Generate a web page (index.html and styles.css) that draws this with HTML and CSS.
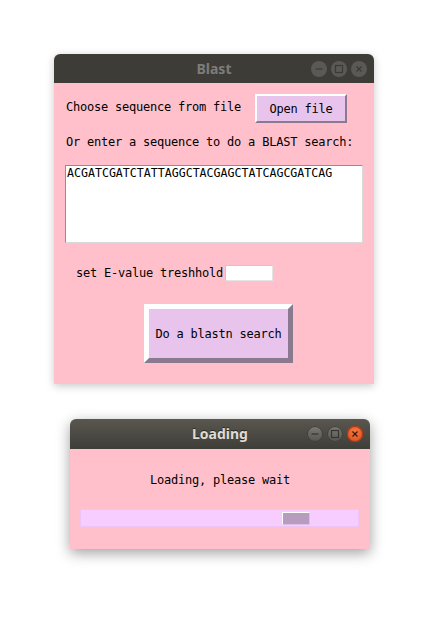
FILE: index.html
```html
<!DOCTYPE html>
<html>
<head>
<meta charset="utf-8">
<title>Blast</title>
<link rel="stylesheet" href="styles.css">
</head>
<body>
<div class="desktop">
  <div class="window blast">
    <div class="titlebar inactive">
      <span class="spacer"></span>
      <span class="title">Blast</span>
      <div class="controls">
        <span class="ctl"><svg viewBox="0 0 16 16" width="16" height="16"><path d="M4.5 8h7" /></svg></span>
        <span class="ctl"><svg viewBox="0 0 16 16" width="16" height="16"><rect x="4.5" y="4.5" width="7" height="7" /></svg></span>
        <span class="ctl"><svg viewBox="0 0 16 16" width="16" height="16"><path d="M5.5 5.5l5 5M10.5 5.5l-5 5" /></svg></span>
      </div>
    </div>
    <div class="content blast-content">
      <div class="row-file">
        <span class="label lift">Choose sequence from file</span>
        <button class="btn btn-open">Open file</button>
      </div>
      <div class="label prompt">Or enter a sequence to do a BLAST search:</div>
      <div class="seq">ACGATCGATCTATTAGGCTACGAGCTATCAGCGATCAG</div>
      <div class="row-eval">
        <span class="label">set E-value treshhold</span>
        <span class="entry"></span>
      </div>
      <button class="btn btn-search">Do a blastn search</button>
    </div>
  </div>

  <div class="window loading">
    <div class="titlebar active">
      <span class="spacer"></span>
      <span class="title">Loading</span>
      <div class="controls">
        <span class="ctl"><svg viewBox="0 0 16 16" width="16" height="16"><path d="M4.5 8h7" /></svg></span>
        <span class="ctl"><svg viewBox="0 0 16 16" width="16" height="16"><rect x="4.5" y="4.5" width="7" height="7" /></svg></span>
        <span class="ctl close"><svg viewBox="0 0 16 16" width="16" height="16"><path d="M5.5 5.5l5 5M10.5 5.5l-5 5" /></svg></span>
      </div>
    </div>
    <div class="content loading-content">
      <div class="label message">Loading, please wait</div>
      <div class="progress"><span class="indicator" style="margin-left: 201px"></span></div>
    </div>
  </div>
</div>
</body>
</html>
```

FILE: styles.css
```css
html, body {
  margin: 0;
  padding: 0;
  background: #ffffff;
}

.desktop {
  position: relative;
  width: 426px;
  height: 631px;
  overflow: hidden;
}

.window {
  position: absolute;
  border-radius: 6px 6px 0 0;
  overflow: visible;
}

.blast {
  left: 54px;
  top: 54px;
  width: 320px;
  box-shadow: 0 2px 9px rgba(0, 0, 0, 0.22);
}

.loading {
  left: 70px;
  top: 419px;
  width: 300px;
  box-shadow: 0 4px 14px rgba(0, 0, 0, 0.38);
}

.titlebar {
  display: grid;
  grid-template-columns: 1fr auto 1fr;
  align-items: center;
  border-radius: 6px 6px 0 0;
  font-family: "Noto Sans", "DejaVu Sans", sans-serif;
  font-weight: bold;
  font-size: 14px;
}

.titlebar.inactive {
  height: 29px;
  background: #3d3c37;
  color: #7e7c77;
}

.titlebar.active {
  height: 30px;
  background: linear-gradient(#59574f, #3e3d38);
  color: #dfdbd2;
}

.titlebar.active .title {
  text-shadow: 0 -1px 0 rgba(0, 0, 0, 0.5);
}

.title {
  line-height: 18px;
}

.controls {
  justify-self: end;
  display: flex;
  gap: 4px;
  padding-right: 7px;
}

.ctl {
  width: 16px;
  height: 16px;
  border-radius: 50%;
  display: flex;
  box-sizing: border-box;
}

.ctl svg {
  display: block;
  fill: none;
  stroke-width: 1.2;
}

.inactive .ctl {
  background: #5a5955;
}

.inactive .ctl svg {
  stroke: #3b3a36;
}

.active .ctl {
  background: linear-gradient(#7c7a75, #55544f);
  box-shadow: inset 0 0 0 1px #3f3e3a;
}

.active .ctl svg {
  stroke: #35342f;
}

.active .ctl.close {
  background: radial-gradient(circle at 50% 35%, #f27a45, #d9481a);
  box-shadow: inset 0 0 0 1px #a8360f;
}

.active .ctl.close svg {
  stroke: #3b1608;
}

.content {
  background: #ffc0cb;
  overflow: hidden;
}

.label {
  font-family: "DejaVu Sans Mono", "Liberation Mono", monospace;
  font-size: 12px;
  letter-spacing: -0.22px;
  line-height: 14px;
  color: #000000;
  white-space: pre;
}

.blast-content {
  height: 301px;
}

.row-file {
  display: flex;
  align-items: center;
  margin-top: 11px;
  padding-left: 12px;
  padding-right: 27px;
}

.lift {
  padding-bottom: 3px;
}

.btn {
  font-family: "DejaVu Sans Mono", "Liberation Mono", monospace;
  font-size: 12px;
  letter-spacing: -0.22px;
  color: #000000;
  background: #e8c4ec;
  border-style: solid;
  border-color: #ffffff #8b7a8f #8b7a8f #ffffff;
  box-sizing: border-box;
  padding: 0;
  margin: 0;
}

.btn-open {
  margin-left: auto;
  width: 92px;
  height: 29px;
  border-width: 2px;
}

.prompt {
  margin-top: 12px;
  padding-left: 12px;
}

.seq {
  margin: 16px 0 0 11px;
  width: 298px;
  height: 78px;
  box-sizing: border-box;
  background: #ffffff;
  border: 1px solid;
  border-color: #8e8e8e #dadada #dadada #8e8e8e;
  padding: 0 1px;
  font-family: "DejaVu Sans Mono", "Liberation Mono", monospace;
  font-size: 11.6px;
  line-height: 15px;
  color: #000000;
}

.row-eval {
  display: flex;
  align-items: center;
  margin-top: 22px;
  padding-left: 22px;
  height: 16px;
}

.entry {
  margin-left: 2px;
  width: 48px;
  height: 16px;
  box-sizing: border-box;
  background: #ffffff;
  border: 1px solid;
  border-color: #c8c8c8 #e4e4e4 #e4e4e4 #c8c8c8;
}

.btn-search {
  display: block;
  margin: 23px 0 0 90px;
  width: 149px;
  height: 59px;
  border-width: 5px;
}

.loading-content {
  height: 100px;
}

.message {
  margin-top: 24px;
  text-align: center;
}

.progress {
  display: flex;
  align-items: center;
  margin: 22px 0 0 10px;
  width: 279px;
  height: 18px;
  box-sizing: border-box;
  background: #f7ccff;
  border: 1px solid #eec3f6;
}

.indicator {
  width: 28px;
  height: 13px;
  box-sizing: border-box;
  background: #b89cbf;
  border: 1px solid;
  border-color: #ffffff #dcbfe4 #dcbfe4 #ffffff;
}
```
